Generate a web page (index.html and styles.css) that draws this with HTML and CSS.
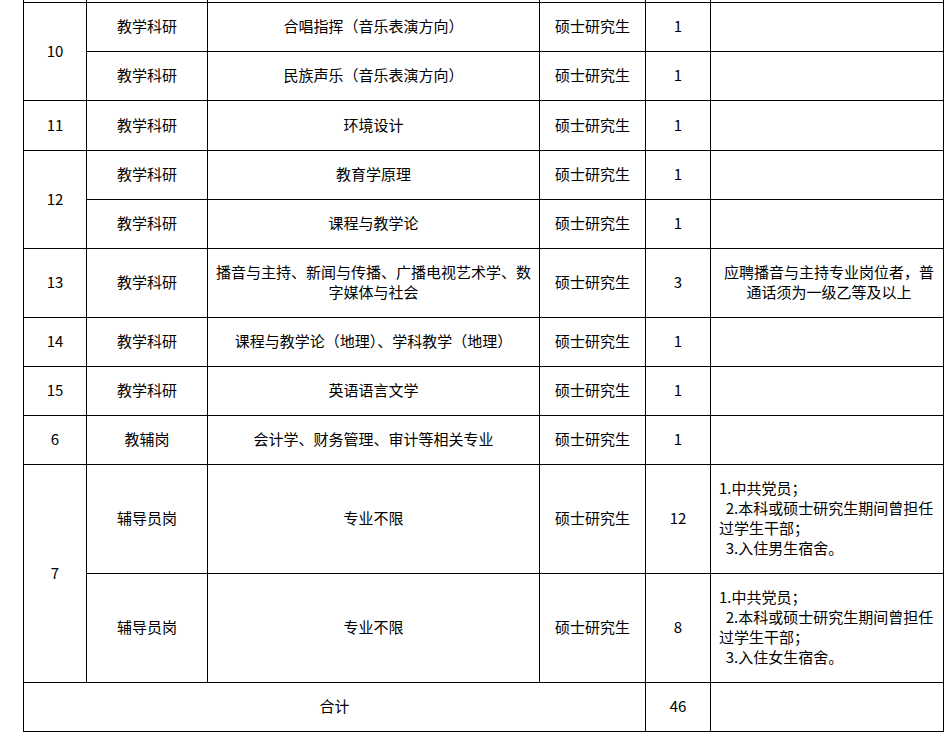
FILE: index.html
```html
<!DOCTYPE html>
<html lang="zh-CN">
<head>
<meta charset="utf-8">
<title>岗位表</title>
<link rel="stylesheet" href="styles.css">
</head>
<body>
<table class="jobs">
  <colgroup>
    <col class="c-no">
    <col class="c-type">
    <col class="c-major">
    <col class="c-degree">
    <col class="c-count">
    <col class="c-note">
  </colgroup>
  <tbody>
    <tr class="h49 prior"><td></td><td></td><td></td><td></td><td></td><td></td></tr>
    <tr class="h49"><td rowspan="2">10</td><td>教学科研</td><td>合唱指挥（音乐表演方向）</td><td>硕士研究生</td><td>1</td><td></td></tr>
    <tr class="h49"><td>教学科研</td><td>民族声乐（音乐表演方向）</td><td>硕士研究生</td><td>1</td><td></td></tr>
    <tr class="h50"><td>11</td><td>教学科研</td><td>环境设计</td><td>硕士研究生</td><td>1</td><td></td></tr>
    <tr class="h49"><td rowspan="2">12</td><td>教学科研</td><td>教育学原理</td><td>硕士研究生</td><td>1</td><td></td></tr>
    <tr class="h49"><td>教学科研</td><td>课程与教学论</td><td>硕士研究生</td><td>1</td><td></td></tr>
    <tr class="h69"><td>13</td><td>教学科研</td><td>播音与主持、新闻与传播、广播电视艺术学、数字媒体与社会</td><td>硕士研究生</td><td>3</td><td class="note-c">应聘播音与主持专业岗位者，普通话须为一级乙等及以上</td></tr>
    <tr class="h49"><td>14</td><td>教学科研</td><td>课程与教学论（地理）、学科教学（地理）</td><td>硕士研究生</td><td>1</td><td></td></tr>
    <tr class="h49"><td>15</td><td>教学科研</td><td>英语语言文学</td><td>硕士研究生</td><td>1</td><td></td></tr>
    <tr class="h49"><td>6</td><td>教辅岗</td><td>会计学、财务管理、审计等相关专业</td><td>硕士研究生</td><td>1</td><td></td></tr>
    <tr class="h109"><td rowspan="2">7</td><td>辅导员岗</td><td>专业不限</td><td>硕士研究生</td><td>12</td><td class="note">1.中共党员；<br>&nbsp;&nbsp;2.本科或硕士研究生期间曾担任过学生干部；<br>&nbsp;&nbsp;3.入住男生宿舍。</td></tr>
    <tr class="h109"><td>辅导员岗</td><td>专业不限</td><td>硕士研究生</td><td>8</td><td class="note">1.中共党员；<br>&nbsp;&nbsp;2.本科或硕士研究生期间曾担任过学生干部；<br>&nbsp;&nbsp;3.入住女生宿舍。</td></tr>
    <tr class="h49"><td colspan="4">合计</td><td>46</td><td></td></tr>
  </tbody>
</table>
</body>
</html>
```

FILE: styles.css
```css
html, body {
  margin: 0;
  padding: 0;
  background: #fff;
}

body {
  font-family: "Noto Sans CJK SC", "Microsoft YaHei", sans-serif;
  font-size: 15px;
  line-height: 20px;
  color: #000;
}

.jobs {
  border-collapse: collapse;
  table-layout: fixed;
  width: 920px;
  margin: -47px 0 0 23px;
}

.c-no { width: 63px; }
.c-type { width: 121px; }
.c-major { width: 332px; }
.c-degree { width: 106px; }
.c-count { width: 65px; }
.c-note { width: 233px; }

.jobs td {
  border: 1px solid #000;
  text-align: center;
  vertical-align: middle;
  padding: 0 7px 2px;
}

.jobs td.note {
  text-align: left;
  padding: 0 4px 2px 8px;
}

.jobs td.note-c {
  padding: 0 4px 2px 8px;
}

.h49 { height: 49px; }
.h50 { height: 50px; }
.h69 { height: 69px; }
.h109 { height: 109px; }
```
